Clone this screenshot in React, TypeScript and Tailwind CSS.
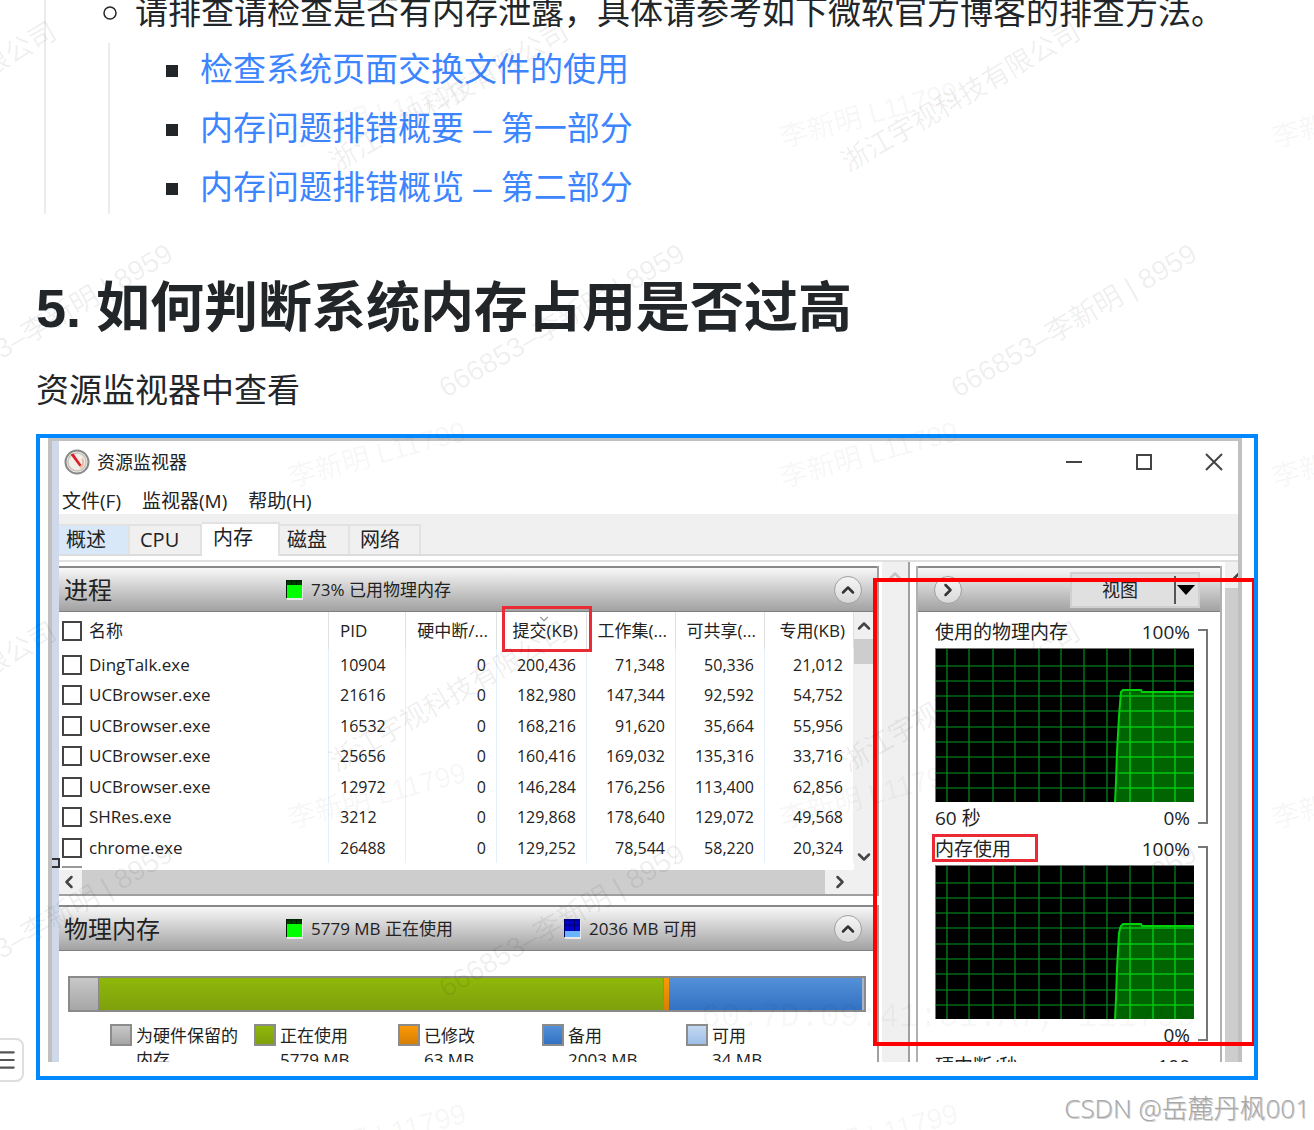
import type { ReactNode } from 'react'
import { ChevronDown, ChevronLeft, ChevronRight, ChevronUp, Menu } from 'lucide-react'

const links = ['检查系统页面交换文件的使用', '内存问题排错概要 – 第一部分', '内存问题排错概览 – 第二部分']

const tabs = [
  { label: '概述', className: 'h-[30px] w-[71px] bg-[#d8e8f8] pl-[7px]' },
  { label: 'CPU', className: 'h-[30px] w-[72px] pl-[10px]' },
  { label: '内存', className: 'h-[34px] w-[78px] bg-white pl-[11px] -mb-[2px] pb-1' },
  { label: '磁盘', className: 'h-[30px] w-[70px] pl-[7px]' },
  { label: '网络', className: 'h-[30px] w-[71px] pl-[10px]' },
]

const columns = ['硬中断/...', '提交(KB)', '工作集(...', '可共享(...', '专用(KB)']

const processes = [
  { name: 'DingTalk.exe', pid: '10904', values: ['0', '200,436', '71,348', '50,336', '21,012'] },
  { name: 'UCBrowser.exe', pid: '21616', values: ['0', '182,980', '147,344', '92,592', '54,752'] },
  { name: 'UCBrowser.exe', pid: '16532', values: ['0', '168,216', '91,620', '35,664', '55,956'] },
  { name: 'UCBrowser.exe', pid: '25656', values: ['0', '160,416', '169,032', '135,316', '33,716'] },
  { name: 'UCBrowser.exe', pid: '12972', values: ['0', '146,284', '176,256', '113,400', '62,856'] },
  { name: 'SHRes.exe', pid: '3212', values: ['0', '129,868', '178,640', '129,072', '49,568'] },
  { name: 'chrome.exe', pid: '26488', values: ['0', '129,252', '78,544', '58,220', '20,324'] },
]

const legend = [
  { label: '为硬件保留的', value: '内存', color: 'from-[#c8c8c8] to-[#a6a6a6]' },
  { label: '正在使用', value: '5779 MB', color: 'from-[#8fb80a] to-[#7ea00c]' },
  { label: '已修改', value: '63 MB', color: 'from-[#fc9a06] to-[#d67f05]' },
  { label: '备用', value: '2003 MB', color: 'from-[#5490d8] to-[#3272c4]' },
  { label: '可用', value: '34 MB', color: 'from-[#c4d8f2] to-[#9cbfe8]' },
]

const gridX = [12, 34, 58, 80, 104, 126, 149, 172, 195, 218, 240]
const gridY = [18, 33, 48, 63, 79, 94, 109, 125, 140]

function RoundButton({ label, children }: { label: string; children: ReactNode }) {
  return (
    <button
      aria-label={label}
      className="flex size-7 shrink-0 items-center justify-center rounded-full border border-[#a0a0a0] bg-linear-to-b from-[#f6f6f6] to-[#d8d8d8] text-[#333]"
    >
      {children}
    </button>
  )
}

function PanelHeader({ children }: { children: ReactNode }) {
  return (
    <div className="flex h-[46px] items-center border-t-2 border-b border-t-[#888] border-b-[#808080] bg-linear-to-b from-[#f8f8f8] to-[#a2a2a2]">
      {children}
    </div>
  )
}

function MeterIcon({ blue = false }: { blue?: boolean }) {
  return (
    <svg width="18" height="20" viewBox="0 0 18 20" className="shrink-0">
      <rect x="2" y="1" width="16" height="19" fill="#e8e8e8" />
      <rect x="1" y="0" width="16" height="18" fill={blue ? '#0000d0' : '#00ff00'} />
      {blue ? (
        <>
          <rect x="1" y="12" width="16" height="6" fill="#6ab4ff" />
          <path d="M1 1h16M1 6h16M6.500 0v12M11.500 0v12M1.500 0v18" stroke="#000060" />
        </>
      ) : (
        <>
          <rect x="1" y="0" width="16" height="5" fill="#003c00" />
          <path d="M1 1h16M6.500 0v5M11.500 0v5M1.500 0v18" stroke="#001800" />
        </>
      )}
    </svg>
  )
}

function GaugeIcon() {
  return (
    <svg width="26" height="26" viewBox="0 0 26 26">
      <circle cx="13" cy="13" r="11.500" fill="#f2efeb" stroke="#888" strokeWidth="2" />
      <circle cx="13" cy="13" r="9" fill="none" stroke="#c9c4bd" strokeWidth="1.500" />
      <path d="M18 9.500a6 6 0 0 1-2 9" fill="none" stroke="#f0b898" strokeWidth="2" />
      <path d="M6.500 5.500l3-1 8 11.500-2 1.500z" fill="#dd1f26" />
    </svg>
  )
}

function WindowButton({ label, path }: { label: string; path: string }) {
  return (
    <button aria-label={label}>
      <svg width="18" height="18" viewBox="0 0 18 18" fill="none" stroke="#444" strokeWidth="2">
        <path d={path} />
      </svg>
    </button>
  )
}

function Graph({ top }: { top: number }) {
  const area = `M180 154L181 134L182 104L184 68L186 ${top}L188 ${top - 2}L206 ${top - 2}L207 ${top}H259`
  return (
    <svg viewBox="0 0 259 154" preserveAspectRatio="none" className="block h-[154px] w-full">
      <rect width="259" height="154" fill="#000" />
      <path d={`${area}V154Z`} fill="#006400" />
      {gridX.map((x) => (
        <path key={x} d={`M${x} 0V154`} stroke="#00821a" strokeOpacity="0.65" strokeWidth="2" />
      ))}
      {gridY.map((y) => (
        <path key={y} d={`M0 ${y}H259`} stroke="#00821a" strokeOpacity="0.6" strokeWidth="2" />
      ))}
      {gridX.filter((x) => x > 186).map((x) => (
        <path key={x} d={`M${x} ${top}V154`} stroke="#00d20a" strokeOpacity="0.6" strokeWidth="2" />
      ))}
      {gridY.filter((y) => y > top).map((y) => (
        <path key={y} d={`M184 ${y}H259`} stroke="#00d20a" strokeOpacity="0.6" strokeWidth="2" />
      ))}
      <path d={area} fill="none" stroke="#00d20a" strokeWidth="2" />
      <path d="M0 0.500H259M0.500 0V154" stroke="#777" />
    </svg>
  )
}

function GraphBlock({ title, caption, top, marked = false }: { title: string; caption?: string; top: number; marked?: boolean }) {
  return (
    <div className="flex">
      <div className="min-w-0 flex-1 text-[19px] leading-6">
        <div className="flex h-8 items-center justify-between pr-1 pb-px">
          <span className="relative">
            {title}
            {marked && <span className="absolute -top-[3px] -right-[27px] -bottom-px -left-[3px] border-3 border-[#ea2a35]" />}
          </span>
          <span>100%</span>
        </div>
        <Graph top={top} />
        <div className="flex h-[31px] items-center justify-between pr-1">
          <span>{caption}</span>
          <span>0%</span>
        </div>
      </div>
      <div className="mt-[13px] ml-1 h-[195px] w-[10px] border-y-2 border-r-2 border-[#777]" />
    </div>
  )
}

function ProcessTable() {
  return (
    <div className="flex h-[258px] overflow-hidden bg-white">
      <div className="min-w-0 flex-1">
        <table className="w-full table-fixed border-collapse text-[16px] leading-6">
          <colgroup>
            <col />
            <col className="w-[77px]" />
            <col className="w-[91px]" />
            <col className="w-[90px]" />
            <col className="w-[89px]" />
            <col className="w-[89px]" />
            <col className="w-[89px]" />
          </colgroup>
          <thead>
            <tr className="h-[37px] text-[17px]">
              <th className="border-r border-[#e0e0e0] p-0 text-left font-normal">
                <label className="flex items-center gap-[7px] pl-[3px]">
                  <input type="checkbox" className="size-5 appearance-none border-2 border-[#444] bg-white" />
                  名称
                </label>
              </th>
              <th className="border-r border-[#e0e0e0] p-0 pl-[11px] text-left font-normal">PID</th>
              {columns.map((column) => (
                <th key={column} className="relative border-r border-[#e0e0e0] p-0 pr-2 text-right font-normal whitespace-nowrap">
                  {column === '提交(KB)' && (
                    <ChevronDown size={14} className="absolute top-0 left-10 text-[#999]" />
                  )}
                  {column}
                </th>
              ))}
            </tr>
          </thead>
          <tbody>
            {processes.map((process) => (
              <tr key={process.pid} className="odd:h-[31px] even:h-[30px]">
                <td className="border-r border-[#e6f0fa] p-0 text-[17px]">
                  <label className="flex items-center gap-[7px] pl-[3px]">
                    <input type="checkbox" className="size-5 appearance-none border-2 border-[#444] bg-white" />
                    {process.name}
                  </label>
                </td>
                <td className="border-r border-[#e6f0fa] p-0 pl-[11px]">{process.pid}</td>
                {process.values.map((value, index) => (
                  <td key={index} className="border-r border-[#e6f0fa] p-0 pr-[10px] text-right">{value}</td>
                ))}
              </tr>
            ))}
          </tbody>
        </table>
        <div className="mt-[3px] ml-[3px] h-[2px] w-5 bg-[#999]" />
      </div>
      <div className="flex w-[23px] flex-col bg-[#f0f0f0] text-[#444]">
        <div className="flex h-[27px] items-center"><ChevronUp size={20} strokeWidth={3} /></div>
        <div className="h-[25px] w-[21px] bg-[#cdcdcd]" />
        <div className="mt-auto flex h-[27px] items-center"><ChevronDown size={20} strokeWidth={3} /></div>
      </div>
    </div>
  )
}

function MemoryBar() {
  return (
    <div className="mt-[25px] mr-[11px] ml-[9px] flex h-9 border-2 border-[#8a8a8a]">
      <div className="w-[29px] border-r border-[#888] bg-linear-to-b from-[#c8c8c8] to-[#a6a6a6]" />
      <div className="flex-1 bg-linear-to-b from-[#8fb80a] to-[#7ea00c]" />
      <div className="w-[6px] border-l border-[#888] bg-linear-to-b from-[#fc9a06] to-[#d67f05]" />
      <div className="w-[193px] bg-linear-to-b from-[#5490d8] to-[#3272c4]" />
      <div className="w-[2px] bg-[#a8b4c8]" />
    </div>
  )
}

function ResourceMonitor() {
  return (
    <div className="flex h-[624px] flex-col overflow-hidden border-t-3 border-r-4 border-l-4 border-[#c0c0c0] bg-white font-['Open_Sans','Noto_Sans_CJK_SC',sans-serif] text-[#222]">
      <div className="flex min-h-0 flex-1 flex-col border-l-7 border-[#d0d9ea]">
        <div className="flex h-[42px] items-center pl-[5px]">
          <GaugeIcon />
          <span className="ml-[7px] text-[18px] leading-6">资源监视器</span>
          <div className="ml-auto flex gap-[52px] pr-[15px]">
            <WindowButton label="最小化" path="M1 9h16" />
            <WindowButton label="最大化" path="M2 2h14v14h-14z" />
            <WindowButton label="关闭" path="M1 1l16 16M17 1l-16 16" />
          </div>
        </div>
        <div className="flex h-[31px] items-center gap-[21px] pt-1 pl-[3px] text-[19px] leading-6">
          <button>文件(F)</button>
          <button>监视器(M)</button>
          <button>帮助(H)</button>
        </div>
        <div className="flex h-[42px] shrink-0 items-end border-b-2 border-[#dcdcdc] bg-[#f0f0f0] text-[20px] leading-6">
          {tabs.map((tab) => (
            <button key={tab.label} className={`flex items-center border-t-2 border-r-2 border-[#e2e2e2] ${tab.className}`}>
              {tab.label}
            </button>
          ))}
        </div>
        <div className="mt-1 h-[2px] shrink-0 bg-[#e0e0e0]" />

        <div className="flex min-h-0 flex-1">
          <div className="min-w-0 flex-1 pt-1">
            <section className="relative border-r-2 border-b-2 border-[#a0a0a0]">
              <PanelHeader>
                <h2 className="w-[226px] pl-[5px] text-[24px] leading-8">进程</h2>
                <MeterIcon />
                <span className="ml-2 text-[17px] leading-6">73% 已用物理内存</span>
                <div className="mr-[15px] ml-auto"><RoundButton label="折叠进程"><ChevronUp size={20} strokeWidth={3} /></RoundButton></div>
              </PanelHeader>
              <ProcessTable />
              <div className="flex h-6 items-center bg-[#f0f0f0] text-[#444]">
                <ChevronLeft size={20} strokeWidth={3} />
                <div className="mr-[5px] ml-[3px] h-full flex-1 bg-[#cdcdcd]" />
                <ChevronRight size={20} strokeWidth={3} className="mr-[27px]" />
              </div>
              {/* highlight around the commit column */}
              <div className="absolute top-10 right-[285px] h-[46px] w-[90px] border-3 border-[#ea2a35]" />
            </section>
            <section className="mt-[9px] h-[200px] border-r-2 border-[#a0a0a0]">
              <PanelHeader>
                <h2 className="w-[226px] pl-[5px] text-[24px] leading-8">物理内存</h2>
                <MeterIcon />
                <span className="ml-2 w-[252px] text-[17px] leading-6">5779 MB 正在使用</span>
                <MeterIcon blue />
                <span className="ml-2 text-[17px] leading-6">2036 MB 可用</span>
                <div className="mr-[15px] ml-auto"><RoundButton label="折叠物理内存"><ChevronUp size={20} strokeWidth={3} /></RoundButton></div>
              </PanelHeader>
              <MemoryBar />
              <ul className="mt-3 ml-[51px] flex text-[17px] leading-6">
                {legend.map((item) => (
                  <li key={item.label} className="flex w-36 shrink-0 gap-1">
                    <span className={`size-[22px] shrink-0 border-2 border-[#8c8c8c] bg-linear-to-b ${item.color}`} />
                    <span className="whitespace-nowrap">
                      {item.label}
                      <br />
                      {item.value}
                    </span>
                  </li>
                ))}
              </ul>
            </section>
          </div>

          <div className="ml-[3px] w-7 border-r-2 border-[#a0a0a0] bg-[#f0f0f0] pt-1">
            <ChevronUp size={20} strokeWidth={3} className="ml-[3px] text-[#c4c4c4]" />
          </div>

          <aside className="mt-1 ml-[6px] w-[306px] border-r-2 border-l-2 border-[#b0b0b0]">
            <PanelHeader>
              <div className="ml-4"><RoundButton label="展开"><ChevronRight size={20} strokeWidth={3} /></RoundButton></div>
              <button className="mr-5 ml-auto flex h-9 w-[130px] items-center border-2 border-[#d0d0d0] bg-[#e0e0e0] text-[18px] leading-6">
                <span className="flex-1 pl-[30px] text-left">视图</span>
                <span className="flex h-7 w-6 items-center border-l-2 border-[#555] pl-px">
                  <svg width="18" height="10" viewBox="0 0 18 10"><path d="M0 0h18l-9 10z" fill="#000" /></svg>
                </span>
              </button>
            </PanelHeader>
            <div className="pt-1 pr-3 pl-[17px]">
              <GraphBlock title="使用的物理内存" caption="60 秒" top={44} />
              <GraphBlock title="内存使用" top={61} marked />
              <div className="flex h-8 items-center justify-between pr-[18px] text-[19px] leading-6">
                <span>硬中断/秒</span>
                <span>100</span>
              </div>
            </div>
          </aside>

          <div className="ml-[3px] flex w-[13px] flex-col bg-[#cdcdcd]">
            <div className="h-[26px] overflow-hidden bg-[#f0f0f0] pt-1 pl-1"><ChevronUp size={20} strokeWidth={3} className="max-w-none text-[#444]" /></div>
          </div>
        </div>
      </div>
    </div>
  )
}

function Watermarks() {
  return (
    <svg className="pointer-events-none absolute inset-0 h-full w-full font-['Liberation_Sans','Noto_Sans_CJK_SC',sans-serif] text-[28px]" fill="#000" fillOpacity="0.07" textAnchor="middle">
      {[115, 455, 796, 1137].map((y) =>
        [377, 869, 1361].map((x) => (
          <text key={`${x}-${y}`} transform={`translate(${x} ${y}) rotate(-15)`} dy="9" fillOpacity="0.05">李新明 L11799</text>
        )),
      )}
      {[0, 600].map((y) =>
        [-63, 449, 961].map((x) => (
          <g key={`${x}-${y}`}>
            <text className="text-[27px]" transform={`translate(${x} ${y + 97}) rotate(-30)`} dy="9">浙江宇视科技有限公司</text>
            <text transform={`translate(${x + 113} ${y + 321}) rotate(-30)`} dy="9">666853–李新明 | 8959</text>
          </g>
        )),
      )}
    </svg>
  )
}

export default function App() {
  return (
    <div className="relative min-h-screen overflow-hidden bg-white font-['Liberation_Sans','Noto_Sans_CJK_SC',sans-serif] text-[#222629]">
      <article className="pr-14 pl-9">
        <div className="ml-2 h-[214px] overflow-hidden border-l-2 border-[#ececec] text-[33px] leading-[54px]">
          <div className="-mt-[18px] flex h-[61px] items-center pl-[57px] whitespace-nowrap">
            <svg width="14" height="14" viewBox="0 0 14 14" className="mr-[18px] shrink-0">
              <circle cx="7" cy="7" r="6" fill="none" stroke="#222629" strokeWidth="1.500" />
            </svg>
            请排查请检查是否有内存泄露，具体请参考如下微软官方博客的排查方法。
          </div>
          <ul className="ml-[62px] flex flex-col gap-[5px] border-l-2 border-[#ececec] pl-14">
            {links.map((link) => (
              <li key={link} className="flex items-center">
                <span className="mt-px mr-[22px] size-3 shrink-0 bg-[#222629]" />
                <a href="#" className="text-[#3d85ff]">{link}</a>
              </li>
            ))}
          </ul>
        </div>

        <h1 className="mt-[54px] text-[54px] leading-[80px] font-bold">5. 如何判断系统内存占用是否过高</h1>
        <p className="mt-4 text-[33px] leading-[54px]">资源监视器中查看</p>

        <figure className="relative mt-4 border-4 border-[#0089ff] pt-0 pr-3 pb-[14px] pl-2">
          <ResourceMonitor />
          <div className="absolute top-[140px] right-0 h-[468px] w-[381px] border-4 border-r-2 border-[#ff0000]" />
          <div className="absolute top-[420px] left-3 h-[10px] w-2 border-y-2 border-r-2 border-[#333]" />
          <figcaption className="absolute right-[58px] bottom-[38px] font-['Liberation_Mono',monospace] text-[33px] leading-10 text-black/4">
            60:7D:09:41:81:A7, 111799
          </figcaption>
        </figure>
      </article>

      <button aria-label="目录" className="absolute top-[1038px] -left-5 flex h-11 w-11 items-center justify-end rounded-lg border-2 border-[#dedede] bg-white pr-1 text-[#555]">
        <Menu size={26} />
      </button>
      <Watermarks />
      <div className="absolute right-1 bottom-1 font-['Open_Sans','Noto_Sans_CJK_SC',sans-serif] text-[26px] leading-9 font-light text-[#a8a8a8] text-shadow-[1px_1px_0_#d0d0d0]">
        CSDN @岳麓丹枫001
      </div>
    </div>
  )
}
